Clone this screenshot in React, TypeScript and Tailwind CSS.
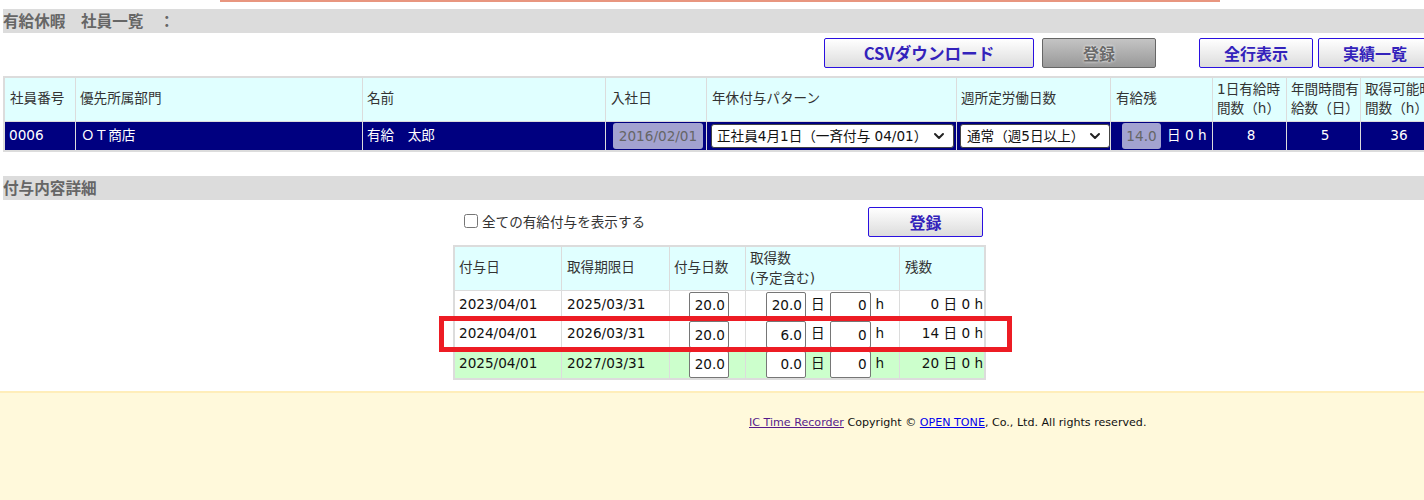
import { ChevronDown } from "lucide-react";

const font = "font-['DejaVu_Sans','Noto_Sans_CJK_JP',sans-serif]";

const btn =
  "h-[30px] shrink-0 rounded-[2px] border border-[#2a10e0] bg-linear-to-b from-white to-[#dcdcdc] font-['Noto_Sans_CJK_JP',sans-serif] text-[16px] font-bold text-[#3322bb]";
const numInput =
  "h-[27px] rounded-[2px] border border-[#767676] bg-white px-[3px] text-right text-[13.6px] text-[#111] outline-none";
const disabledInput =
  "block h-[26px] rounded-[3px] bg-[#a3a3d0] text-center text-[13.6px] text-[#666] outline-none";

const headers = [
  { lines: ["社員番号"], pad: "pl-[5px]" },
  { lines: ["優先所属部門"], pad: "pl-[4px]" },
  { lines: ["名前"], pad: "pl-[4px]" },
  { lines: ["入社日"], pad: "pl-[5px]" },
  { lines: ["年休付与パターン"], pad: "pl-[5px]" },
  { lines: ["週所定労働日数"], pad: "pl-[4px]" },
  { lines: ["有給残"], pad: "pl-[5px]" },
  { lines: ["1日有給時", "間数（h）"], pad: "pl-[4px]" },
  { lines: ["年間時間有", "給数（日）"], pad: "pl-[4px]" },
  { lines: ["取得可能時", "間数（h）"], pad: "pl-[4px]" },
];

const grants = [
  { from: "2023/04/01", to: "2025/03/31", used: "20.0", left: "0", bg: "bg-white", h: "h-[28px]" },
  { from: "2024/04/01", to: "2026/03/31", used: "6.0", left: "14", bg: "bg-white", h: "h-[29px]" },
  { from: "2025/04/01", to: "2027/03/31", used: "0.0", left: "20", bg: "bg-[#ccffcc]", h: "h-[28px]" },
];

const SectionBar = ({ title }: { title: string }) => (
  <div className="ml-[3px] flex h-[24px] items-center bg-[#dcdcdc] font-['Noto_Sans_CJK_JP',sans-serif] text-[15.6px] font-bold text-[#666]">
    {title}
  </div>
);

const PatternSelect = ({ label, width, pad }: { label: string; width: string; pad: string }) => (
  <div className={`relative ${width}`}>
    <select className={`block h-[24px] w-full appearance-none rounded-[3px] border border-[#444] bg-white ${pad} text-[13.6px] text-[#111]`}>
      <option>{label}</option>
    </select>
    <ChevronDown size={16} strokeWidth={3} className="pointer-events-none absolute right-[7px] top-[4px] text-[#222]" />
  </div>
);

const EmployeeTable = () => (
  <table className="ml-[3px] w-[1433px] table-fixed border-separate border-spacing-[1px] bg-[#dcdcdc] p-[1px] text-[13.6px]">
    <colgroup>
      <col className="w-[70px]" />
      <col className="w-[286px]" />
      <col className="w-[242px]" />
      <col className="w-[100px]" />
      <col className="w-[249px]" />
      <col className="w-[153px]" />
      <col className="w-[101px]" />
      <col className="w-[73px]" />
      <col className="w-[73px]" />
      <col className="w-[73px]" />
    </colgroup>
    <thead>
      <tr className="h-[43px] bg-[#e0ffff] text-[#333]">
        {headers.map((h) => (
          <th key={h.lines[0]} className={`whitespace-nowrap pb-[2px] text-left font-normal leading-[19px] ${h.pad}`}>
            {h.lines.map((l) => (
              <div key={l}>{l}</div>
            ))}
          </th>
        ))}
      </tr>
    </thead>
    <tbody>
      <tr className="h-[28px] bg-[#000080] text-white">
        <td className="pb-[2px] pl-[4px]">0006</td>
        <td className="pb-[2px] pl-[5px]">ＯＴ商店</td>
        <td className="pb-[2px] pl-[4px]">有給　太郎</td>
        <td className="pl-[7px]">
          <input readOnly value="2016/02/01" className={`${disabledInput} w-[90px]`} />
        </td>
        <td className="pl-[4px]">
          <PatternSelect label="正社員4月1日（一斉付与 04/01）" width="w-[243px]" pad="pl-[5px]" />
        </td>
        <td className="pl-[3px]">
          <PatternSelect label="通常（週5日以上）" width="w-[150px]" pad="pl-[6px]" />
        </td>
        <td>
          <div className="flex items-center">
            <input readOnly value="14.0" className={`${disabledInput} ml-[11px] w-[39px]`} />
            <span className="mb-[2px] ml-[6px] whitespace-nowrap">日 0 h</span>
          </div>
        </td>
        <td className="pb-[2px] pl-[3px] text-center">8</td>
        <td className="pb-[2px] pl-[3px] text-center">5</td>
        <td className="pb-[2px] pl-[3px] text-center">36</td>
      </tr>
    </tbody>
  </table>
);

const GrantTable = () => (
  <div className="relative ml-[453px] mt-[8px] w-[533px]">
    <table className="w-[533px] table-fixed border-separate border-spacing-[1px] bg-[#dcdcdc] p-[1px] text-[13.6px] text-[#111]">
      <colgroup>
        <col className="w-[106px]" />
        <col className="w-[107px]" />
        <col className="w-[75px]" />
        <col className="w-[153px]" />
        <col className="w-[84px]" />
      </colgroup>
      <thead>
        <tr className="h-[43px] bg-[#e0ffff] text-[#333]">
          <th className="pb-[2px] pl-[4px] text-left font-normal">付与日</th>
          <th className="pb-[2px] pl-[5px] text-left font-normal">取得期限日</th>
          <th className="pb-[2px] pl-[4px] text-left font-normal">付与日数</th>
          <th className="pb-[2px] pl-[4px] text-left font-normal leading-[20px]">
            取得数
            <br />
            (予定含む)
          </th>
          <th className="pb-[2px] pl-[5px] text-left font-normal">残数</th>
        </tr>
      </thead>
      <tbody>
        {grants.map((g) => (
          <tr key={g.from} className={`${g.h} ${g.bg}`}>
            <td className="pb-[2px] pl-[4px]">{g.from}</td>
            <td className="pb-[2px] pl-[5px]">{g.to}</td>
            <td>
              <div className="flex justify-end pr-[16px]">
                <input readOnly value="20.0" className={`${numInput} w-[40px]`} />
              </div>
            </td>
            <td>
              <div className="flex items-center pl-[20px]">
                <input readOnly value={g.used} className={`${numInput} w-[40px]`} />
                <span className="mb-[2px] ml-[5px]">日</span>
                <input readOnly value="0" className={`${numInput} ml-[5px] w-[41px]`} />
                <span className="mb-[2px] ml-[5px]">h</span>
              </div>
            </td>
            <td className="whitespace-nowrap pb-[2px] pr-[1px] text-right">{g.left} 日 0 h</td>
          </tr>
        ))}
      </tbody>
    </table>
    <div className="absolute left-[-14px] top-[71px] h-[36px] w-[573px] border-[5px] border-[#ed1c24]" />
  </div>
);

export default function App() {
  return (
    <div className={`${font} h-[500px] w-[1424px] overflow-hidden bg-white`}>
      <div className="ml-[220px] h-[2px] w-[1000px] bg-[#e8967f]" />
      <div className="mt-[7px]">
        <SectionBar title="有給休暇　社員一覧　：" />
      </div>

      <div className="mt-[5px] flex h-[30px] pl-[824px]">
        <button className={`${btn} w-[210px]`}>
          <span className="text-[16.6px]">CSVダウンロード</span>
        </button>
        <button className="ml-[8px] h-[30px] w-[114px] shrink-0 rounded-[2px] border border-[#666] bg-linear-to-b from-[#c4c4c4] to-[#999] font-['Noto_Sans_CJK_JP',sans-serif] text-[16px] font-bold text-[#6a6a6a] [text-shadow:0_0_3px_#fff]">
          登録
        </button>
        <button className={`${btn} ml-[43px] w-[114px]`}>全行表示</button>
        <button className={`${btn} ml-[5px] w-[114px]`}>実績一覧</button>
      </div>

      <div className="mt-[8px]">
        <EmployeeTable />
      </div>

      <div className="mt-[24px]">
        <SectionBar title="付与内容詳細" />
      </div>

      <div className="mt-[7px] flex h-[30px] items-center pl-[464px]">
        <input type="checkbox" className="mb-[3px] h-[14px] w-[14px]" />
        <span className="ml-[4px] text-[13.6px] text-[#333]">全ての有給付与を表示する</span>
        <button className={`${btn} ml-auto mr-[441px] w-[115px]`}>登録</button>
      </div>

      <GrantTable />

      <footer className="mt-[11px] h-[200px] border-t-2 border-[#ffeeba] bg-[#fff9db] pl-[749px] pt-[22px] text-[11.1px] text-[#111]">
        <a href="#" className="text-[#551a8b] underline">
          IC Time Recorder
        </a>{" "}
        Copyright ©{" "}
        <a href="#" className="text-[#0000ee] underline">
          OPEN TONE
        </a>
        , Co., Ltd. All rights reserved.
      </footer>
    </div>
  );
}
